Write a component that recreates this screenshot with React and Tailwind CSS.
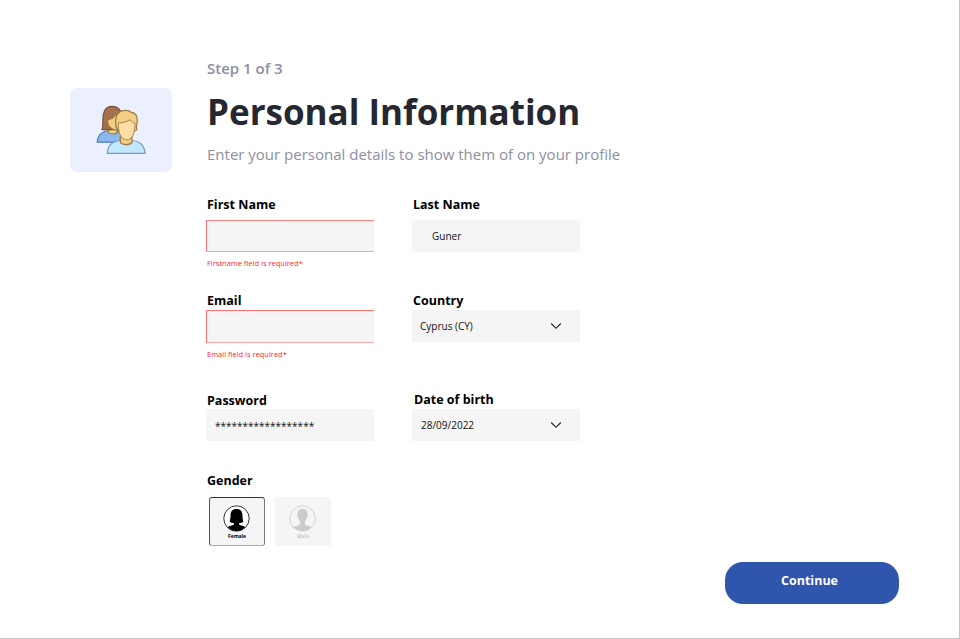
import React from "react";

function Label({ children, className = "" }) {
  return (
    <div className={`h-5 whitespace-nowrap text-[12.5px] leading-5 font-bold text-black ${className}`}>
      {children}
    </div>
  );
}

function ErrorText({ children }) {
  return (
    <div className="mt-[6px] ml-px h-[10px] whitespace-nowrap text-[7.5px] leading-[10px] text-[#ff1f2c]">
      {children}
    </div>
  );
}

function Chevron() {
  return (
    <svg className="mr-[18px] h-[8px] w-[12px]" viewBox="0 0 12 8" fill="none" stroke="#222" strokeWidth="1.15">
      <path d="M1.2 1.5 6 6.3l4.8-4.8" />
    </svg>
  );
}

function PeopleIcon() {
  return (
    <svg className="mr-px h-[50px] w-[50px]" viewBox="0 0 50 50" strokeWidth="1.2">
      <path d="M1.3 37.200c.3-7.600 5.200-11.200 12.700-11.700h6c7 .5 11 4.500 11 11.700z" fill="#8bb7f0" stroke="#4e7ab5" />
      <path d="M12.500 23v4.200c1.500 2.400 6.500 2.400 9 0V20z" fill="#f5ce85" stroke="#967a44" />
      <path d="M6 24.700c1-3 1-6 .9-9.700C7 6 10.500 1.300 15.800 1.300c5.700 0 9.200 3 10 9L22 24.700z" fill="#a6714e" stroke="#7a4f34" />
      <path d="M11.600 14.800c3.500-.4 6.500-2.500 8-5l5 2V24c-6 3-12-1.500-12.600-5z" fill="#f5ce85" stroke="#967a44" />
      <path d="M11.300 48.400c.4-8.200 6-12.400 13.700-12.900h10.500c7.500.5 13 4.700 13.500 12.900z" fill="#c2e8ff" stroke="#7496c4" />
      <path d="M24.300 32v5.300c2 3.200 9.400 3.200 11.700 0V32z" fill="#f5ce85" stroke="#967a44" />
      <path d="M22.300 25.300c-2.300-1.500-2.700-4-2.700-8.300 0-7.200 3.800-11.700 10.200-11.700 2.700 0 4.300.6 5.500 2 4.800.3 6.200 4.700 6 9.200l-1 5c1.300 1.500.5 4.500-1.500 4.500z" fill="#f5ce85" stroke="#967a44" />
      <path d="M22.300 17.800c5 .2 9-1.200 11.700-3.100 1.700 2.600 4 3.500 5 3.600 0 9.500-2.500 16.600-8.500 16.600-5.700 0-8.600-7.800-8.200-17.100z" fill="#ffdea3" stroke="#967a44" strokeWidth=".9" />
    </svg>
  );
}

function Avatar({ female }) {
  return (
    <svg className="mr-px h-[27px] w-[27px]" viewBox="0 0 27 27">
      <circle cx="13.500" cy="13.500" r="12.700" fill={female ? "#fff" : "none"} stroke="currentColor" strokeWidth=".8" />
      <g fill="currentColor">
        {female ? (
          <path d="M13.500 4C9.200 4 7.700 6.500 7.600 10c-.1 3-.5 5.200-.9 7 1.200.8 2.500 1.100 4.200 1.100v1.400c-2 1-4.300 1.200-6.200 2.500 4.600 5.200 13 5.200 17.600 0-1.900-1.300-4.200-1.500-6.200-2.500v-1.400c1.700 0 3-.3 4.200-1.100-.4-1.800-.8-4-.9-7-.1-3.500-1.600-6-5.900-6z" />
        ) : (
          <path d="M13.500 4c-3.700-.2-5.400 2-4.900 5.700-.8.3-.2 3.200.7 3.300.3 1.700.9 2.800 1.800 3.700v2.800c-2 1.200-4.500 1.200-6.400 2.500 4.600 5.200 13 5.200 17.600 0-1.900-1.300-4.400-1.300-6.400-2.500v-2.800c.9-.9 1.500-2 1.800-3.700.9-.1 1.500-3 .7-3.300.5-3.700-1.200-5.900-4.900-5.700z" />
        )}
      </g>
    </svg>
  );
}

export default function App() {
  return (
    <main className="flex h-[639px] w-[960px] overflow-hidden border-r border-b border-[#c4c4c4] bg-white font-['Open_Sans',sans-serif]">
      <div className="mt-[88px] ml-[70px] flex h-[84px] w-[102px] shrink-0 items-center justify-center rounded-[7px] bg-[#ecf0fe]">
        <PeopleIcon />
      </div>

      <section className="ml-[34px] w-[450px] shrink-0 pt-[58px]">
        <header className="ml-px whitespace-nowrap">
          <p className="h-5 text-[15px] leading-5 font-semibold text-[#8c90a2]">Step 1 of 3</p>
          <h1 className="mt-[11px] h-[46px] text-[35px] leading-[46px] font-bold text-[#252830]">Personal Information</h1>
          <p className="mt-[9px] h-5 text-[15px] leading-5 text-[#8c90a2]">
            Enter your personal details to show them of on your profile
          </p>
        </header>

        <form className="mt-[31px]">
          <div className="flex h-[96px] gap-[38px]">
            <div className="w-[168px]">
              <Label className="ml-px">First Name</Label>
              <div className="mt-[5px] h-[32px] border-t border-b border-l border-t-[#ff8585] border-b-[#ffa5a5] border-l-[#ff7070] bg-[#f5f5f5]" />
              <ErrorText>Firstname field is required*</ErrorText>
            </div>
            <div className="w-[168px]">
              <Label className="ml-px">Last Name</Label>
              <div className="mt-[5px] flex h-[32px] items-center bg-[#f5f5f5] pl-[20px] text-[10px] text-[#111]">Guner</div>
            </div>
          </div>

          <div className="flex h-[99px] gap-[38px]">
            <div className="w-[168px]">
              <Label className="ml-px">Email</Label>
              <div className="-mt-px h-[33px] border-t border-b border-l border-t-[#ff7070] border-b-[#ffa5a5] border-l-[#ff7070] bg-[#f5f5f5]" />
              <ErrorText>Email field is required*</ErrorText>
            </div>
            <div className="w-[168px]">
              <Label className="ml-px">Country</Label>
              <div className="-mt-px flex h-[32px] items-center justify-between bg-[#f5f5f5] pl-[8px] text-[10px] text-[#111]">
                Cyprus (CY)
                <Chevron />
              </div>
            </div>
          </div>

          <div className="flex h-[80px] gap-[38px]">
            <div className="w-[168px]">
              <Label className="ml-px pt-px">Password</Label>
              <div className="-mt-px flex h-[32px] items-center bg-[#f5f5f5] pt-[2px] pl-[9px] text-[10px] text-[#111]">
                ******************
              </div>
            </div>
            <div className="w-[168px]">
              <Label className="ml-[2px]">Date of birth</Label>
              <div className="-mt-px flex h-[32px] items-center justify-between bg-[#f5f5f5] pl-[9px] text-[10px] text-[#111]">
                28/09/2022
                <Chevron />
              </div>
            </div>
          </div>

          <Label className="ml-px pt-px">Gender</Label>
          <div className="mt-[7px] ml-[3px] flex gap-[10px]">
            <div className="flex h-[49px] w-[56px] flex-col items-center rounded-[3px] border border-t-[#333] border-r-[#777] border-b-[#aaa] border-l-[#555] bg-[#f5f5f5] pt-[7px] text-black">
              <Avatar female />
              <span className="mt-px text-[5px] leading-[7px] font-bold">Female</span>
            </div>
            <div className="flex h-[49px] w-[56px] flex-col items-center rounded-[3px] bg-[#f5f5f5] pt-[8px] text-[#cbcbcb]">
              <Avatar />
              <span className="mt-px text-[5px] leading-[7px] font-bold">Male</span>
            </div>
          </div>
        </form>
      </section>

      <button className="mt-[562px] ml-[69px] h-[42px] w-[174px] shrink-0 rounded-[18px] bg-[#2f55ac] pr-[5px] pb-[4px] text-[12.5px] font-bold text-white">
        Continue
      </button>
    </main>
  );
}
